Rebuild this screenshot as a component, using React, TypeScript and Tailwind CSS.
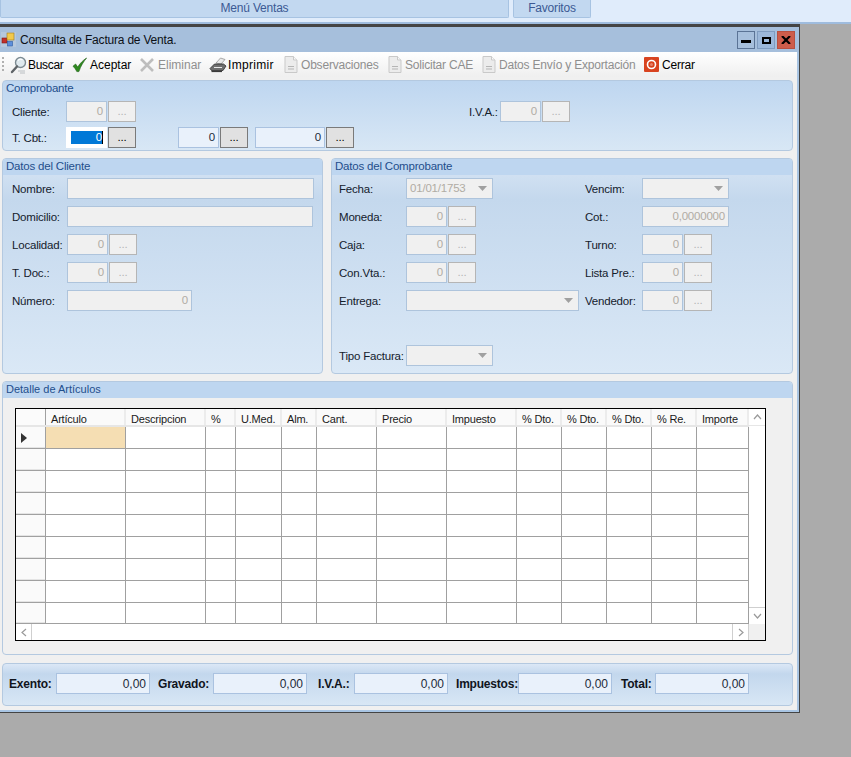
import type { ReactNode } from "react";

const font = "font-['Liberation_Sans',Arial,sans-serif]";
const form = "text-[11.5px] tracking-[-0.2px]";

const Icon = {
  search: (
    <svg width="18" height="18" viewBox="0 0 18 18" fill="none">
      <circle cx="10.500" cy="6.500" r="5" fill="#dfe9ee" stroke="#7d8b92" strokeWidth="1.400" />
      <path d="M8 4.500c1-1.200 3-1.500 4.500-.5" stroke="#fff" strokeWidth="1.200" />
      <path d="M7 10.500 2 16" stroke="#5f6468" strokeWidth="2.400" strokeLinecap="round" />
      <path d="M8 15h7M10 17h5" stroke="#b9bec2" strokeWidth="1" />
    </svg>
  ),
  check: (
    <svg width="16" height="16" viewBox="0 0 16 16" fill="none">
      <path d="M1 9.200 3.600 7l2.100 3.100C7.800 6.600 10.800 3.400 14.600 1c-3 3.600-5.900 8-7.700 13.600H4.800C4 12.600 2.700 10.800 1 9.200Z" fill="#2f8a1f" stroke="#1c5c12" strokeWidth=".6" />
    </svg>
  ),
  cross: (
    <svg width="16" height="16" viewBox="0 0 16 16" fill="none">
      <path d="M2 2 14 14M14 2 2 14" stroke="#bdbdbd" strokeWidth="2.600" />
    </svg>
  ),
  print: (
    <svg width="18" height="16" viewBox="0 0 18 16" fill="none">
      <path d="M7 6 11.500 1 16 2.500 12 7Z" fill="#e9e9e9" stroke="#8a8a8a" strokeWidth=".7" />
      <path d="M1 11.500 5.500 7h9L17 9l-3 4.500H2.500Z" fill="#6e6e6e" stroke="#2d2d2d" strokeWidth=".8" />
      <path d="M5 10.500h8" stroke="#e8e8e8" strokeWidth="1" />
      <path d="M2.500 14.500h10.500" stroke="#3a3a3a" strokeWidth="1.200" />
    </svg>
  ),
  doc: (
    <svg width="14" height="17" viewBox="0 0 14 17" fill="none">
      <path d="M1 .5h8.500L13 4v12.500H1Z" fill="#ececec" stroke="#c9c9c9" />
      <path d="M9.500 .5V4H13" fill="#f8f8f8" stroke="#c9c9c9" />
      <path d="M4 10.500h6M4 13h6" stroke="#b5b5b5" />
    </svg>
  ),
  power: (
    <svg width="15" height="15" viewBox="0 0 15 15" fill="none">
      <rect width="15" height="15" rx="1" fill="#d8431f" />
      <circle cx="7.500" cy="7.500" r="4" stroke="#fff" strokeWidth="1.600" />
      <circle cx="7.500" cy="7.500" r="1.500" fill="#fff" opacity=".35" />
    </svg>
  ),
};

function Tool({ icon, label, w, off, iw, gap, track = "" }: { icon: ReactNode; label: string; w: number; off?: boolean; iw: string; gap: string; track?: string }) {
  return (
    <div className={`flex items-center shrink-0 ${gap}`}>
      <span className={`flex justify-center ${iw}`}>{icon}</span>
      <span style={{ width: w }} className={`whitespace-nowrap ${track} ${off ? "text-[#8f8f8f]" : "text-black"}`}>
        {label}
      </span>
    </div>
  );
}

function Field({ value, w, state = "off" }: { value?: string; w: string; state?: "off" | "on" | "focus" }) {
  const tone =
    state === "off"
      ? "bg-[#f0f0f0] border-[#aec4dc] text-[#b0aca4]"
      : state === "on"
        ? "bg-[#e9f1fb] border-[#aac2e0] text-[#1c2a3a]"
        : "bg-white border-white text-white";
  return (
    <div className={`flex items-center justify-end border pr-[3px] shrink-0 h-[21px] ${w} ${tone}`}>
      {state === "focus" ? (
        <span className="bg-[#0078d7] w-[32px] h-[13px] text-right leading-[13px] border-r border-black">{value}</span>
      ) : (
        value
      )}
    </div>
  );
}

function Dots({ on }: { on?: boolean }) {
  return (
    <div
      className={`flex items-center justify-center border w-[28px] h-[21px] ml-[1px] shrink-0 ${
        on ? "bg-[#e1e1e1] border-[#7a7a7a] text-black" : "bg-[#f0f0f0] border-[#b5b5b5] text-[#b5b5b5]"
      }`}
    >
      ...
    </div>
  );
}

function Combo({ value, w }: { value?: string; w: string }) {
  return (
    <div className={`flex items-center justify-between border border-[#aec4dc] bg-[#f0f0f0] h-[21px] pl-[3px] pr-[5px] shrink-0 ${w}`}>
      <span className="text-[#b0aca4]">{value}</span>
      <svg width="9" height="5" viewBox="0 0 9 5">
        <path d="M0 0h9L4.500 5Z" fill="#a0a0a0" />
      </svg>
    </div>
  );
}

function Lookup() {
  return (
    <div className="flex">
      <Field value="0" w="w-[41px]" />
      <Dots />
    </div>
  );
}

function Label({ children, w }: { children: ReactNode; w: string }) {
  return <span className={`shrink-0 pt-[2px] whitespace-nowrap text-[#14202c] ${w}`}>{children}</span>;
}

function Panel({ title, className, children }: { title: string; className: string; children: ReactNode }) {
  return (
    <section className={`rounded-[4px] border border-[#b4c9e0] overflow-hidden ${className}`}>
      <h2 className="h-[16px] leading-[15px] pl-[3px] bg-[#bed6f0] text-[#1f4e8c] font-normal">{title}</h2>
      {children}
    </section>
  );
}

const cols = [80, 80, 30, 46, 35, 60, 70, 70, 45, 45, 45, 45, 52];
const heads = ["Artículo", "Descripcion", "%", "U.Med.", "Alm.", "Cant.", "Precio", "Impuesto", "% Dto.", "% Dto.", "% Dto.", "% Re.", "Importe"];

function Grid() {
  return (
    <div className="border border-black w-[751px] h-[233px] bg-white flex flex-col ml-[12px]">
      <div className="flex flex-1">
        <div className="w-[733px]">
          <div className="flex h-[18px] border-b-2 border-[#e6e6e6]">
            <div className="w-[30px] bg-[#fbfbfb] border-r border-[#a0a0a0]" />
            {heads.map((h, i) => (
              <div
                key={i}
                style={{ width: cols[i] }}
                className="pl-[5px] leading-[20px] tracking-[-0.2px] bg-[#fafafa] border-r-2 border-[#ececec] text-[#1a1a1a] whitespace-nowrap"
              >
                {h}
              </div>
            ))}
          </div>
          {Array.from({ length: 9 }).map((_, r) => (
            <div key={r} className={`flex ${r === 8 ? "h-[21px]" : "h-[22px]"} border-b border-[#a0a0a0]`}>
              <div className="w-[30px] bg-[#fafafa] border-r border-[#a0a0a0] flex items-center pl-[5px] shadow-[inset_0_-1px_0_#e4e4e4]">
                {r === 0 && (
                  <svg width="6" height="10" viewBox="0 0 6 10">
                    <path d="M0 0l6 5-6 5Z" fill="#333" />
                  </svg>
                )}
              </div>
              {cols.map((c, i) => (
                <div
                  key={i}
                  style={{ width: c }}
                  className={`border-r border-[#a0a0a0] ${r === 0 && i === 0 ? "bg-[#f5deb3]" : ""}`}
                />
              ))}
            </div>
          ))}
        </div>
        <div className="w-[16px] flex flex-col justify-between">
          <div className="h-[17px] flex items-center justify-center border-b border-[#e6e6e6]">
            <svg width="9" height="6" viewBox="0 0 9 6" fill="none">
              <path d="M1 5l3.500-4L8 5" stroke="#9a9a9a" strokeWidth="1.200" />
            </svg>
          </div>
          <div className="h-[17px] flex items-center justify-center border-t border-[#cfcfcf]">
            <svg width="9" height="6" viewBox="0 0 9 6" fill="none">
              <path d="M1 1l3.500 4L8 1" stroke="#9a9a9a" strokeWidth="1.200" />
            </svg>
          </div>
        </div>
      </div>
      <div className="flex h-[16px] shrink-0">
        <div className="w-[16px] border-r border-[#cfcfcf] flex items-center justify-center">
          <svg width="6" height="9" viewBox="0 0 6 9" fill="none">
            <path d="M5 1 1 4.500 5 8" stroke="#9a9a9a" strokeWidth="1.200" />
          </svg>
        </div>
        <div className="flex-1" />
        <div className="w-[16px] border-l border-[#cfcfcf] flex items-center justify-center">
          <svg width="6" height="9" viewBox="0 0 6 9" fill="none">
            <path d="M1 1l4 3.500L1 8" stroke="#9a9a9a" strokeWidth="1.200" />
          </svg>
        </div>
        <div className="w-[17px] bg-[#f0f0f0] border-l border-[#cfcfcf]" />
      </div>
    </div>
  );
}

function Total({ label, w, ml }: { label: string; w: string; ml: string }) {
  return (
    <div className={`flex items-center ${ml}`}>
      <span className={`font-bold tracking-[-0.2px] text-[#10141c] whitespace-nowrap ${w}`}>{label}</span>
      <Field value="0,00" w="w-[94px]" state="on" />
    </div>
  );
}

const panelBg = "bg-[linear-gradient(#d9e6f5_0px,#c4d8ed_40px,#dae8f6_100%)]";

export default function App() {
  return (
    <div className={`${font} w-[851px] h-[757px] bg-[#ababab] text-[12px] overflow-hidden`}>
      {/* menu strip */}
      <div className="h-[24px] bg-[#e0ecfb] border-b-2 border-[#9fbcde] flex text-[#3c5a94] tracking-[-0.2px]">
        <div className="w-[509px] h-[18px] bg-[#c2d8f0] border border-t-0 border-[#a7c3e2] rounded-b-[2px] text-center leading-[16px]">
          Menú Ventas
        </div>
        <div className="ml-[4px] w-[78px] h-[18px] bg-[#c2d8f0] border border-t-0 border-[#a7c3e2] rounded-b-[2px] text-center leading-[16px]">
          Favoritos
        </div>
      </div>

      {/* ventana */}
      <div className="w-[800px] h-[689px] border-t-[3px] border-r border-b border-[#444] flex flex-col">
        <div className="h-[25px] shrink-0 bg-[#a6bfdc] flex items-center pl-[1px]">
          <svg width="15" height="15" viewBox="0 0 15 15" className="shrink-0 bg-[#b6c8dd]">
            <rect x="1" y="6" width="5" height="5" fill="#c4302b" stroke="#7a1a16" strokeWidth=".6" />
            <rect x="6" y="1" width="7" height="7" fill="#f2c94c" stroke="#a07c1c" strokeWidth=".6" />
            <rect x="6.500" y="9.500" width="5" height="4.500" fill="#5d8fdc" stroke="#2c5aa0" strokeWidth=".6" />
          </svg>
          <span className="ml-[4px] pt-[1px] text-[#0c1016] whitespace-nowrap tracking-[-0.2px]">Consulta de Factura de Venta.</span>
          <div className="ml-auto mr-[4px] mt-[1px] flex gap-[2px]">
            <div className="w-[18px] h-[18px] border border-[#5a7395] flex items-center justify-center pt-[3px]">
              <div className="w-[10px] h-[3px] bg-black" />
            </div>
            <div className="w-[18px] h-[18px] border border-[#7f9cc0] bg-[#9cb8da] flex items-center justify-center">
              <div className="w-[9px] h-[7px] border-2 border-black" />
            </div>
            <div className="w-[18px] h-[18px] border border-[#b9503f] bg-[#cd5d4b] flex items-center justify-center">
              <svg width="10" height="8" viewBox="0 0 10 8">
                <path d="M1 0 9 8M9 0 1 8" stroke="#000" strokeWidth="2.200" />
              </svg>
            </div>
          </div>
        </div>

        <div className="flex-1 bg-[#f0f0f0] border-r-2 border-b-2 border-[#a9c5e3]">
          <div className="h-[25px] bg-[linear-gradient(#ffffff,#efefef)] flex items-center pl-[2px]">
            <div className="w-[2px] h-[15px] mr-[6px] bg-[repeating-linear-gradient(#b0b0b0_0,#b0b0b0_2px,transparent_2px,transparent_4px)]" />
            <Tool icon={Icon.search} label="Buscar" w={35} iw="w-[18px]" gap="gap-0" track="tracking-[-0.3px]" />
            <div className="w-[9px]" />
            <Tool icon={Icon.check} label="Aceptar" w={42} iw="w-[16px]" gap="gap-[2px]" />
            <div className="w-[7px]" />
            <Tool icon={Icon.cross} label="Eliminar" w={44} off iw="w-[16px]" gap="gap-[3px]" />
            <div className="w-[7px]" />
            <Tool icon={Icon.print} label="Imprimir" w={47} iw="w-[18px]" gap="gap-[1px]" track="tracking-[0.3px]" />
            <div className="w-[9px]" />
            <Tool icon={Icon.doc} label="Observaciones" w={78} off iw="w-[14px]" gap="gap-[3px]" track="tracking-[-0.2px]" />
            <div className="w-[9px]" />
            <Tool icon={Icon.doc} label="Solicitar CAE" w={68} off iw="w-[14px]" gap="gap-[3px]" track="tracking-[-0.2px]" />
            <div className="w-[9px]" />
            <Tool icon={Icon.doc} label="Datos Envío y Exportación" w={137} off iw="w-[14px]" gap="gap-[3px]" track="tracking-[-0.2px]" />
            <div className="w-[8px]" />
            <Tool icon={Icon.power} label="Cerrar" w={33} iw="w-[15px]" gap="gap-[3px]" track="tracking-[-0.2px]" />
          </div>

          <div className="px-[2px] pt-[3px] flex flex-col gap-[7px]">
            <section className={`w-[791px] h-[71px] rounded-[4px] border border-[#b4c9e0] bg-[linear-gradient(#bed6f0,#d8e7f5)] overflow-hidden ${form}`}>
              <h2 className="h-[16px] leading-[15px] pl-[3px] text-[#1f4e8c] font-normal">Comprobante</h2>
              <div className="pl-[9px] pt-[4px] flex flex-col gap-[5px]">
                <div className="flex items-center">
                  <Label w="w-[54px]">Cliente:</Label>
                  <Lookup />
                  <span className="ml-[333px] w-[31px] pt-[2px] text-[#14202c] whitespace-nowrap">I.V.A.:</span>
                  <Lookup />
                </div>
                <div className="flex items-center">
                  <Label w="w-[54px]">T. Cbt.:</Label>
                  <Field value="0" w="w-[41px]" state="focus" />
                  <Dots on />
                  <div className="flex ml-[42px]">
                    <Field value="0" w="w-[41px]" state="on" />
                    <Dots on />
                  </div>
                  <div className="flex ml-[7px]">
                    <Field value="0" w="w-[70px]" state="on" />
                    <Dots on />
                  </div>
                </div>
              </div>
            </section>

            <div className={`flex gap-[8px] ${form}`}>
              <Panel title="Datos del Cliente" className={`w-[321px] h-[216px] ${panelBg}`}>
                <div className="pl-[9px] pt-[3px] flex flex-col gap-[7px]">
                  <div className="flex items-center">
                    <Label w="w-[55px]">Nombre:</Label>
                    <Field w="w-[247px]" />
                  </div>
                  <div className="flex items-center">
                    <Label w="w-[55px]">Domicilio:</Label>
                    <Field w="w-[246px]" />
                  </div>
                  <div className="flex items-center">
                    <Label w="w-[55px]">Localidad:</Label>
                    <Lookup />
                  </div>
                  <div className="flex items-center">
                    <Label w="w-[55px]">T. Doc.:</Label>
                    <Lookup />
                  </div>
                  <div className="flex items-center">
                    <Label w="w-[55px]">Número:</Label>
                    <Field value="0" w="w-[125px]" />
                  </div>
                </div>
              </Panel>

              <Panel title="Datos del Comprobante" className={`w-[462px] h-[216px] ${panelBg}`}>
                <div className="pl-[7px] pt-[3px] flex flex-col gap-[7px]">
                  <div className="flex items-center">
                    <Label w="w-[67px]">Fecha:</Label>
                    <Combo value="01/01/1753" w="w-[87px]" />
                    <Label w="w-[57px] ml-[92px]">Vencim:</Label>
                    <Combo w="w-[87px]" />
                  </div>
                  <div className="flex items-center">
                    <Label w="w-[67px]">Moneda:</Label>
                    <Lookup />
                    <Label w="w-[57px] ml-[109px]">Cot.:</Label>
                    <Field value="0,0000000" w="w-[87px]" />
                  </div>
                  <div className="flex items-center">
                    <Label w="w-[67px]">Caja:</Label>
                    <Lookup />
                    <Label w="w-[57px] ml-[109px]">Turno:</Label>
                    <Lookup />
                  </div>
                  <div className="flex items-center">
                    <Label w="w-[67px]">Con.Vta.:</Label>
                    <Lookup />
                    <Label w="w-[57px] ml-[109px]">Lista Pre.:</Label>
                    <Lookup />
                  </div>
                  <div className="flex items-center">
                    <Label w="w-[67px]">Entrega:</Label>
                    <Combo w="w-[173px]" />
                    <Label w="w-[57px] ml-[6px]">Vendedor:</Label>
                    <Lookup />
                  </div>
                  <div className="flex items-center mt-[27px]">
                    <Label w="w-[67px]">Tipo Factura:</Label>
                    <Combo w="w-[87px]" />
                  </div>
                </div>
              </Panel>
            </div>

            <div className="text-[11px]">
              <Panel title="Detalle de Artículos" className="w-[791px] h-[274px] bg-[#f0f0f0]">
                <div className="pt-[10px]">
                  <Grid />
                </div>
              </Panel>
            </div>

            <section className="w-[791px] h-[43px] mt-[1px] pb-[2px] rounded-[4px] border border-[#b4c9e0] bg-[linear-gradient(#dce8f6_0px,#c3d7ed_10px,#d8e7f5_100%)] flex items-center pl-[6px]">
              <Total label="Exento:" w="w-[47px]" ml="" />
              <Total label="Gravado:" w="w-[55px]" ml="ml-[8px]" />
              <Total label="I.V.A.:" w="w-[36px]" ml="ml-[11px]" />
              <Total label="Impuestos:" w="w-[62px]" ml="ml-[8px]" />
              <Total label="Total:" w="w-[34px]" ml="ml-[9px]" />
            </section>
          </div>
        </div>
      </div>
    </div>
  );
}
